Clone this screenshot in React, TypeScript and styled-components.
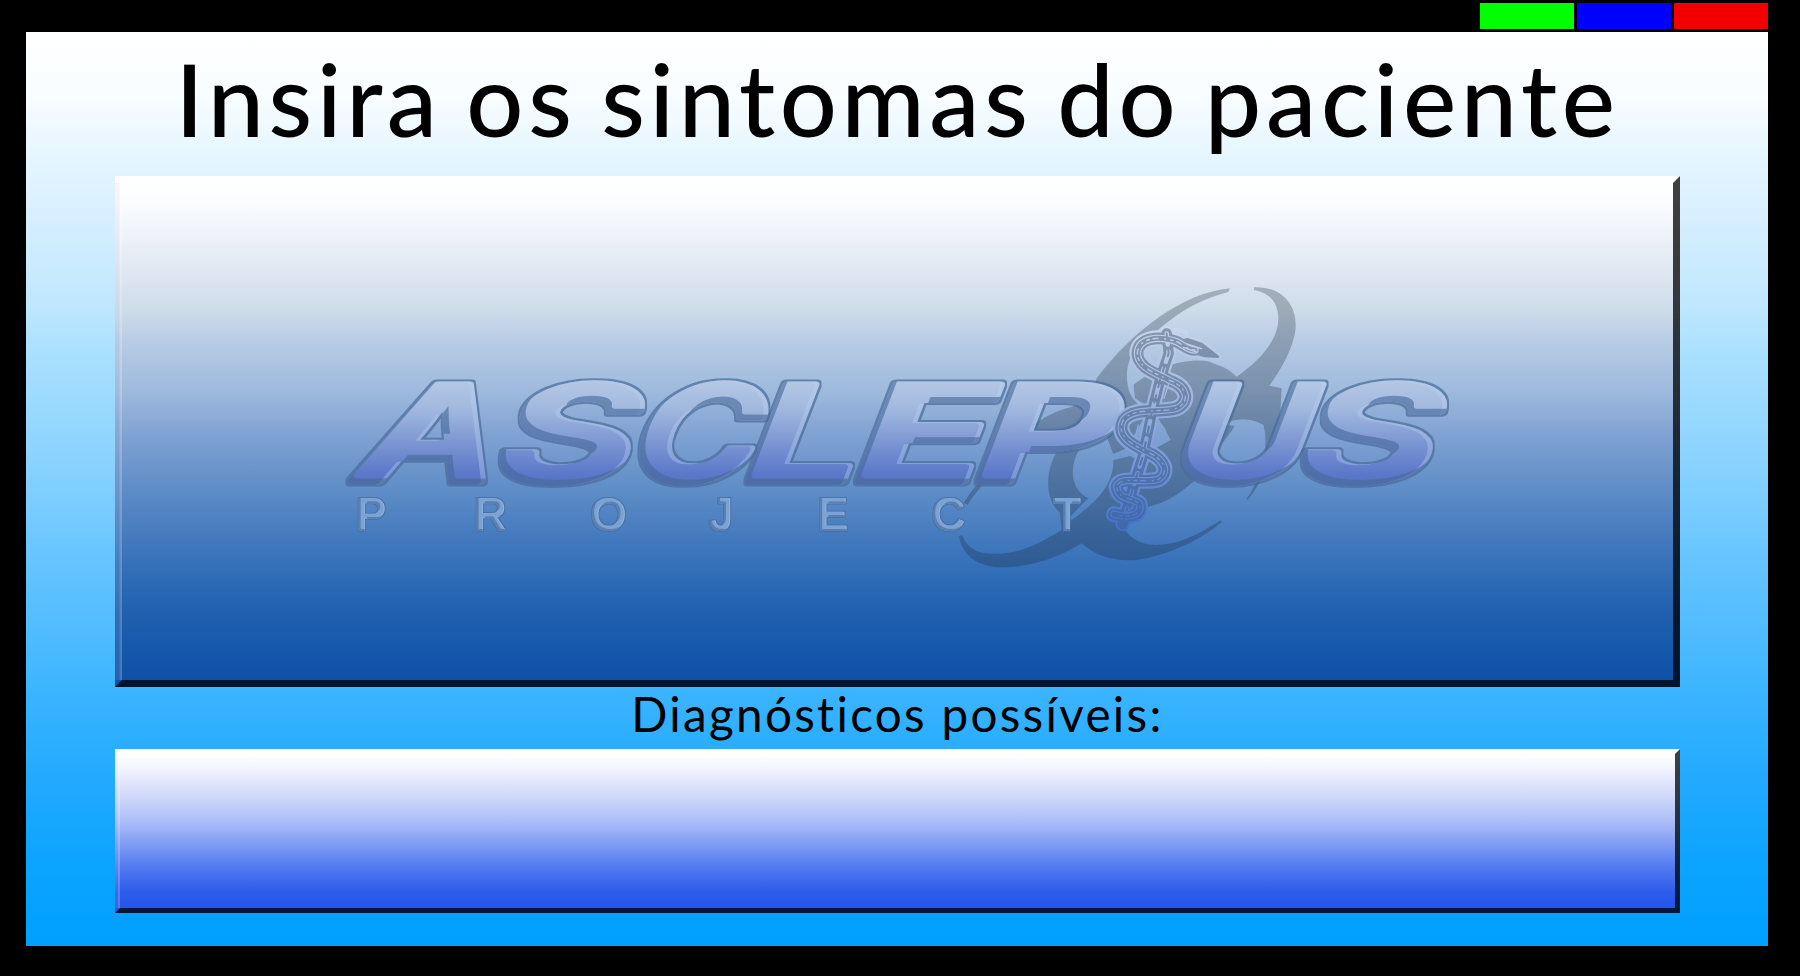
import React from "react";
import styled, { createGlobalStyle } from "styled-components";

const GlobalStyle = createGlobalStyle`
  * { box-sizing: border-box; }
  body { margin: 0; background: #000; overflow: hidden; }
`;

const Page = styled.div`
  width: 1800px;
  height: 976px;
  padding: 3px 32px 30px 26px;
  display: flex;
  flex-direction: column;
  background: #000;
  color: #000;
  font-family: Lato, "Liberation Sans", sans-serif;
`;

const TopBar = styled.nav`
  display: flex;
  justify-content: flex-end;
  gap: 3px;
  height: 29px;
  flex: none;
`;

const ColorButton = styled.button<{ $color: string }>`
  width: 94px;
  height: 26px;
  padding: 0;
  border: 0;
  background: ${(p) => p.$color};
`;

const Main = styled.main`
  height: 914px;
  padding: 0 88px 0 89px;
  display: flex;
  flex-direction: column;
  background: linear-gradient(
    #fff 0, #f9fdff 60px, #e4f5ff 130px, #d8efff 183px, #bfe7ff 273px, #aae0ff 320px,
    #88d2ff 433px, #68c5ff 522px, #4dbbff 608px, #30b0ff 694px, #1fa9ff 759px,
    #0ca4ff 828px, #00a0ff 914px
  );
`;

const Title = styled.h1`
  margin: 0;
  height: 144px;
  font-size: 100.5px;
  font-weight: 500;
  line-height: 133px;
  letter-spacing: 4.7px;
  word-spacing: -5.5px;
  text-align: center;
  white-space: nowrap;
`;

const Subtitle = styled.h2`
  margin: 0;
  height: 62px;
  font-size: 47.6px;
  font-weight: 400;
  line-height: 53px;
  letter-spacing: 2.3px;
  text-align: center;
  white-space: nowrap;
`;

const Panel = styled.section<{ $edge: number; $height: number; $fill: string }>`
  position: relative;
  flex: none;
  height: ${(p) => p.$height}px;
  border: ${(p) => p.$edge}px solid transparent;
  border-right-color: rgba(0, 0, 0, 0.75);
  border-bottom-color: rgba(0, 0, 0, 0.75);
  background: ${(p) => p.$fill} border-box;

  &::before {
    content: "";
    position: absolute;
    top: 0;
    bottom: 0;
    left: -${(p) => p.$edge}px;
    width: ${(p) => p.$edge}px;
    background: linear-gradient(
      90deg,
      rgba(190, 190, 200, 0.14) 0 60%,
      rgba(255, 255, 255, 0.22) 70% 100%
    );
  }
`;

const LogoArt = styled.svg`
  display: block;
  width: 1551px;
  height: 497px;
`;

const symptomsFill = `linear-gradient(
  #fff 0, #fcfdfe 22px, #edf1f8 63px, #dee6f1 99px, #cddbea 135px, #b6cbe4 168px,
  #a0bbdd 212px, #80a2d2 259px, #6692c9 301px, #4b7fc0 348px, #3570b9 390px,
  #2060ae 437px, #1558ac 473px, #1050a8 505px)`;

const diagnosesFill = `linear-gradient(
  #fff 0, #fdfdff 8px, #eceffd 24px, #cfd8fa 48px, #abbef7 72px, #809df4 95px,
  #5079f0 119px, #2d5cec 143px, #2555ea 159px)`;

type Glyph = { ch: string; x: number; sx: number };

const wordmark: Glyph[] = [
  { ch: "A", x: 348, sx: 1.43 },
  { ch: "S", x: 486, sx: 1.6 },
  { ch: "C", x: 621, sx: 1.29 },
  { ch: "L", x: 736, sx: 1.53 },
  { ch: "E", x: 845, sx: 1.63 },
  { ch: "P", x: 966, sx: 1.59 },
  { ch: "U", x: 1163, sx: 1.39 },
  { ch: "S", x: 1288, sx: 1.6 },
];

const snake =
  "M885,240 C865,240 850,225 830,215 C770,195 715,205 712,250 C714,295 770,310 810,332 C862,350 872,395 830,415 C780,430 700,410 670,450 C645,500 700,525 740,545 C790,565 812,605 775,628 C730,642 660,615 650,650 C655,690 690,680 718,700 C730,735 690,740 670,738 L642,733";
const rod = "M800,190 L806,250 L780,330 L755,430 L728,560 L700,650 L668,762";
const head = "M835,215 L862,208 L905,222 L953,260 L915,258 L870,246 Z";

function Emblem() {
  return (
    <g transform="translate(900 270) scale(0.33333)">
      <mask id="hazard" maskUnits="userSpaceOnUse" x="150" y="0" width="1100" height="930">
        <g fill="#fff">
          <path d="M990,55 C850,68 700,180 590,325 L570,400 C480,410 400,450 330,530 C270,600 220,650 190,700 L203,704 C250,630 330,560 420,500 L620,500 L640,552 L680,535 L740,430 L712,400 C675,370 668,290 705,240 C760,200 830,105 985,66 Z" />
          <path d="M1062,52 C1145,48 1190,105 1187,170 C1185,220 1150,290 1108,347 L1145,355 L1140,440 C1120,540 1100,620 1043,690 L1040,686 C1080,630 1110,530 1090,465 C1050,443 1000,445 965,465 L1005,467 C970,560 850,690 745,710 L720,560 L830,500 L880,330 L830,285 C900,265 965,275 1010,320 C1090,265 1138,200 1135,140 C1132,95 1110,70 1062,60 Z" />
          <path d="M700,345 C760,295 860,260 930,275 L1010,322 L1000,500 L830,540 L760,420 L705,385 Z" />
          <path d="M480,530 C430,600 435,690 480,728 L485,780 C420,820 360,850 295,851 C240,855 205,840 186,796 L176,799 C190,860 235,893 310,892 C410,890 490,855 545,820 C590,862 650,875 710,870 C810,855 910,805 966,755 L962,751 C900,790 840,824 770,825 C715,825 680,800 668,760 L740,715 L870,632 L820,530 L725,550 L640,570 C640,640 600,690 512,752 L510,740 L565,685 C512,660 505,590 540,535 Z" />
        </g>
        <path d="M748,458 C795,450 812,490 790,522 L700,565 L672,540 L740,520 Z" fill="#000" />
        <path d="M965,465 C1010,443 1050,443 1090,465 C1080,520 1040,558 960,552 C945,540 985,500 1005,467 Z" fill="#000" />
      </mask>
      <rect x="150" y="0" width="1100" height="930" fill="#14202e" opacity="0.26" mask="url(#hazard)" />
    </g>
  );
}

function Serpent() {
  return (
    <g
      transform="translate(900 270) scale(0.33333)"
      fill="none"
      strokeLinecap="round"
      strokeLinejoin="round"
    >
      <g stroke="url(#snakeLight)">
        <path d={rod} strokeWidth="44" />
        <path d={snake} strokeWidth="48" />
        <path d="M790,178 L800,190 L825,180 L855,185 L862,205" strokeWidth="14" />
        <path d={head} strokeWidth="24" />
      </g>
      <g stroke="url(#snakeDark)">
        <path d={rod} strokeWidth="31" />
        <path d={snake} strokeWidth="35" />
        <path d={head} strokeWidth="8" fill="url(#snakeDark)" />
      </g>
      <g stroke="url(#snakeLight)">
        <path d={snake} strokeWidth="22" />
        <path d={rod} strokeWidth="13" strokeDasharray="34 20" />
      </g>
      <g stroke="url(#snakeDark)">
        <path d={snake} strokeWidth="15" />
        <path d={rod} strokeWidth="6" strokeDasharray="22 26" />
      </g>
      <g stroke="url(#snakeLight)" strokeWidth="4">
        <path d={snake} strokeDasharray="9 14 3 20 15 11" />
        <path d="M765,240 C735,250 745,275 775,280 M805,345 L792,385 M715,465 L706,500 M745,570 L735,600 M700,705 L690,722 M860,222 L905,236 M850,232 L890,246" />
      </g>
    </g>
  );
}

function BevelFilter({ id, depth, rim }: { id: string; depth: number; rim: number }) {
  return (
    <filter id={id} x="-5%" y="-15%" width="110%" height="130%" colorInterpolationFilters="sRGB">
      <feMorphology in="SourceAlpha" operator="dilate" radius={rim} result="fat" />
      <feFlood floodColor="#4a6c9a" floodOpacity="0.72" />
      <feComposite in2="fat" operator="in" result="outline" />
      <feOffset in="SourceAlpha" dx={depth} dy={-depth} result="up" />
      <feComposite in="SourceAlpha" in2="up" operator="out" result="shadeArea" />
      <feFlood floodColor="#47699a" floodOpacity="0.62" />
      <feComposite in2="shadeArea" operator="in" result="shade" />
      <feOffset in="SourceAlpha" dx={-depth * 0.9} dy={depth * 0.2} result="left" />
      <feComposite in="SourceAlpha" in2="left" operator="out" result="lightArea" />
      <feFlood floodColor="#b9d2f2" floodOpacity="0.36" />
      <feComposite in2="lightArea" operator="in" result="light" />
      <feMerge>
        <feMergeNode in="outline" />
        <feMergeNode in="SourceGraphic" />
        <feMergeNode in="light" />
        <feMergeNode in="shade" />
      </feMerge>
    </filter>
  );
}

function Logo() {
  return (
    <LogoArt viewBox="122 183 1551 497" role="img" aria-label="Asclepius Project">
      <defs>
        <linearGradient id="face" gradientUnits="userSpaceOnUse" x1="0" y1="-98" x2="0" y2="2">
          <stop offset="0" stopColor="#b3c7e4" />
          <stop offset="0.25" stopColor="#a2b9df" />
          <stop offset="0.6" stopColor="#7c96d2" />
          <stop offset="0.92" stopColor="#5a77c9" />
          <stop offset="1" stopColor="#5675bd" />
        </linearGradient>
        <linearGradient id="snakeLight" gradientUnits="userSpaceOnUse" x1="0" y1="170" x2="0" y2="770">
          <stop offset="0" stopColor="#c9d7ea" />
          <stop offset="0.35" stopColor="#a1b5df" />
          <stop offset="0.65" stopColor="#7e9cda" />
          <stop offset="1" stopColor="#456fcb" />
        </linearGradient>
        <linearGradient id="snakeDark" gradientUnits="userSpaceOnUse" x1="0" y1="170" x2="0" y2="770">
          <stop offset="0" stopColor="#8698af" />
          <stop offset="0.5" stopColor="#627fa9" />
          <stop offset="1" stopColor="#3d68aa" />
        </linearGradient>
        <BevelFilter id="bevel" depth={6} rim={1.5} />
        <BevelFilter id="bevelSmall" depth={1.6} rim={1} />
      </defs>
      <Emblem />
      <g
        fontFamily="Inter, sans-serif"
        fontWeight="600"
        fontSize="132"
        fill="url(#face)"
        stroke="url(#face)"
        strokeWidth="7"
        strokeLinejoin="round"
      >
        {wordmark.map((g) => (
          <g key={g.x} filter="url(#bevel)">
            <text transform={`translate(${g.x} 481) skewX(-21) scale(${g.sx} 1)`}>{g.ch}</text>
          </g>
        ))}
      </g>
      <text
        x="356 474 591 710 817.500 932 1053"
        y="530"
        fontFamily="Liberation Sans, sans-serif"
        fontSize="45"
        fill="#7ba3d6"
        stroke="#7ba3d6"
        strokeWidth="2"
        strokeLinejoin="round"
        filter="url(#bevelSmall)"
      >
        PROJECT
      </text>
      <Serpent />
    </LogoArt>
  );
}

export default function App() {
  return (
    <>
      <GlobalStyle />
      <Page>
        <TopBar>
          <ColorButton $color="#00ff00" aria-label="Verde" />
          <ColorButton $color="#0000ff" aria-label="Azul" />
          <ColorButton $color="#f20000" aria-label="Vermelho" />
        </TopBar>
        <Main>
          <Title>Insira os sintomas do paciente</Title>
          <Panel $edge={7} $height={511} $fill={symptomsFill}>
            <Logo />
          </Panel>
          <Subtitle>Diagnósticos possíveis:</Subtitle>
          <Panel $edge={5} $height={164} $fill={diagnosesFill} />
        </Main>
      </Page>
    </>
  );
}
